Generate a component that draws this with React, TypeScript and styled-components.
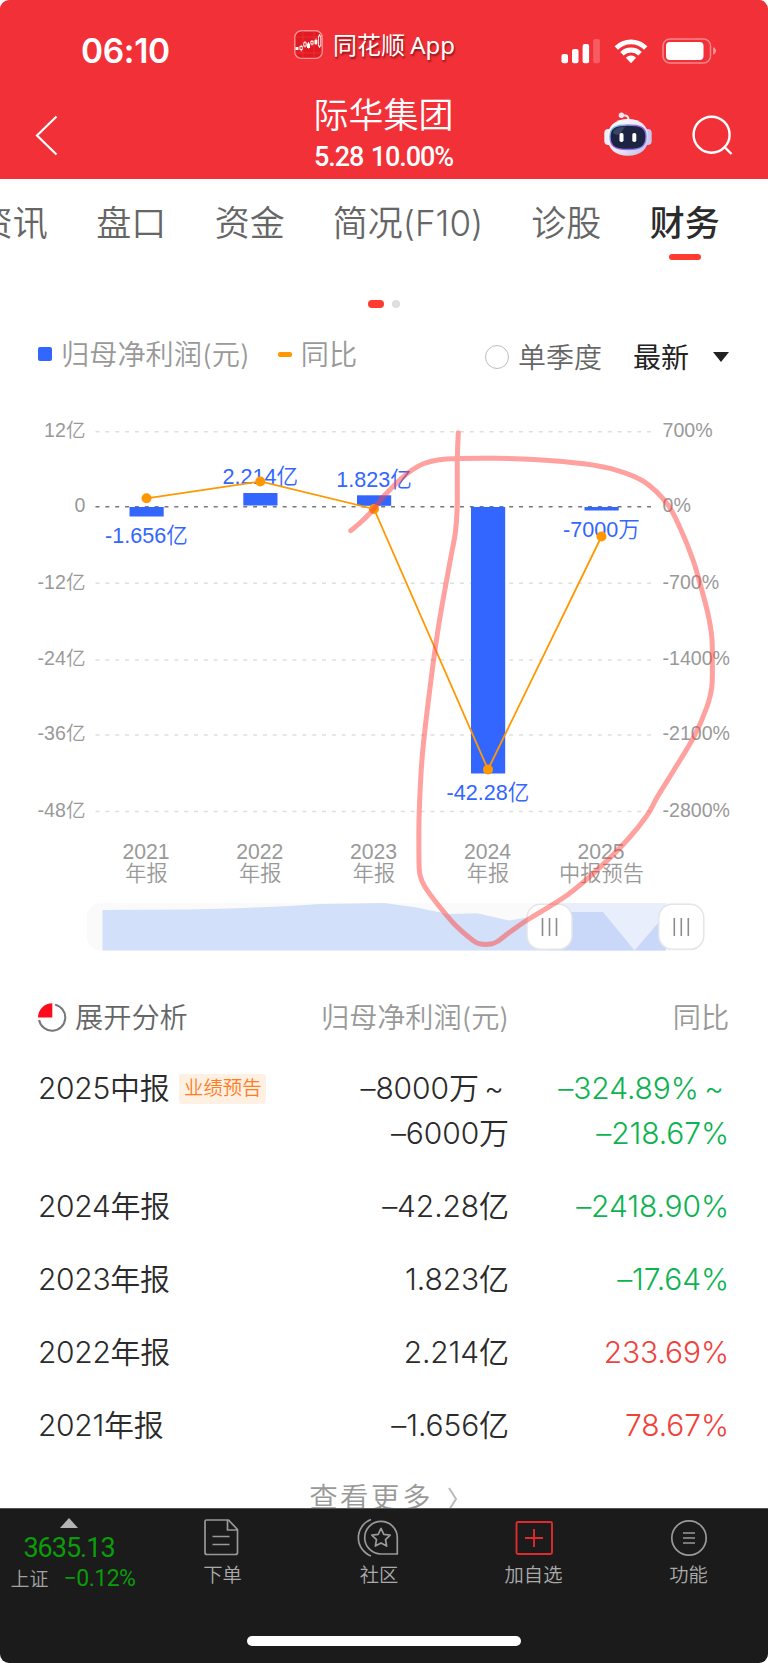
import React from "react";
import styled, { createGlobalStyle } from "styled-components";

const GlobalStyle = createGlobalStyle`
  * { box-sizing: border-box; }
  html, body { margin: 0; padding: 0; background: #fff; }
  body { font-family: Inter, "Noto Sans CJK SC", sans-serif; }
  svg { display: block; }
`;

const Screen = styled.div`
  width: 768px;
  height: 1663px;
  display: flex;
  flex-direction: column;
  overflow: hidden;
  border-radius: 9px;
  background: #fff;
`;

const Header = styled.header`
  height: 179px;
  flex: none;
  background: #f23038;
  color: #fff;
  display: flex;
  flex-direction: column;
`;

const StatusBar = styled.div`
  height: 90px;
  display: grid;
  grid-template-columns: 213px 1fr 154px;
  padding: 0 54px 0 81px;
`;

const Clock = styled.div`
  padding-top: 31px;
  font-size: 33.5px;
  font-weight: 600;
  line-height: 40px;
  letter-spacing: -0.35px;
`;

const AppBadge = styled.div`
  display: flex;
  gap: 10px;
  padding-top: 30px;
  height: 60px;
`;

const AppName = styled.span`
  font-family: "Noto Sans", "Noto Sans CJK SC", sans-serif;
  font-size: 24px;
  line-height: 30px;
  white-space: pre;
  word-spacing: -1px;
  text-shadow: 1px 2px 2px rgba(70, 0, 0, 0.6);
`;

const StatusIcons = styled.div`
  padding-top: 36px;
`;

const NavBar = styled.div`
  height: 89px;
  display: grid;
  grid-template-columns: 230px 1fr 230px;
`;

const BackButton = styled.div`
  padding: 25px 0 0 34px;
`;

const TitleBlock = styled.div`
  display: flex;
  flex-direction: column;
  align-items: center;
  padding: 1px 1px 0 0;
`;

const StockName = styled.div`
  font-size: 35px;
  font-weight: 350;
  line-height: 48px;
`;

const StockQuote = styled.div`
  font-family: Roboto, sans-serif;
  font-size: 27px;
  font-weight: 500;
  line-height: 36px;
  letter-spacing: -1.1px;
  word-spacing: 2px;
  white-space: nowrap;
`;

const NavActions = styled.div`
  display: flex;
  gap: 37px;
  padding: 21px 0 0 65px;
`;

const Tabs = styled.nav`
  height: 100px;
  flex: none;
  display: flex;
  justify-content: flex-end;
  gap: 48px;
  padding: 17px 48px 0 0;
  overflow: hidden;
`;

const Tab = styled.div<{ $active?: boolean; $width?: number }>`
  flex: none;
  display: flex;
  flex-direction: column;
  align-items: center;
  width: ${(p) => p.$width ?? 70.5}px;
  font-size: 35px;
  line-height: 54px;
  font-weight: ${(p) => (p.$active ? 500 : 350)};
  color: ${(p) => (p.$active ? "#2b2b2b" : "#666")};
  white-space: nowrap;
  &::after {
    content: "";
    display: ${(p) => (p.$active ? "block" : "none")};
    width: 32px;
    height: 6px;
    margin-top: 4px;
    border-radius: 3px;
    background: #ff3b30;
  }
`;

const Pager = styled.div`
  height: 50px;
  flex: none;
  display: flex;
  justify-content: center;
  gap: 8px;
  padding-top: 21px;
`;

const PagerDot = styled.i<{ $active?: boolean }>`
  width: ${(p) => (p.$active ? 16 : 8)}px;
  height: 8px;
  border-radius: 4px;
  background: ${(p) => (p.$active ? "#ff3b30" : "#dedede")};
`;

const Toolbar = styled.div`
  height: 81px;
  flex: none;
  display: flex;
  padding: 0 39px 0 38px;
  font-size: 28px;
  font-weight: 350;
  line-height: 40px;
`;

const Legend = styled.div<{ $gap: number; $ml?: number }>`
  display: flex;
  align-items: center;
  height: 40px;
  margin: 5px 0 0 ${(p) => p.$ml ?? 0}px;
  gap: ${(p) => p.$gap}px;
  color: #999;
  white-space: nowrap;
`;

const LegendText = styled.span`
  padding-top: 2px;
  font-size: 28.2px;
`;

const Swatch = styled.i<{ $color: string; $height: number }>`
  width: 14px;
  height: ${(p) => p.$height}px;
  border-radius: 2px;
  background: ${(p) => p.$color};
`;

const Filters = styled.div`
  display: flex;
  align-items: center;
  height: 40px;
  margin: 8px 0 0 auto;
`;

const Radio = styled.i`
  width: 24px;
  height: 24px;
  margin-right: 9px;
  border: 1.3px solid #bdbdbd;
  border-radius: 50%;
`;

const QuarterLabel = styled.span`
  color: #666;
  margin-right: 31px;
  padding-top: 2px;
`;

const LatestLabel = styled.span`
  color: #222;
  font-weight: 400;
  margin-right: 24px;
  padding-top: 1px;
`;

const Caret = styled.i`
  border: 8.5px solid transparent;
  border-top: 10px solid #222;
  border-bottom: 0;
`;

const Chart = styled.svg`
  flex: none;
  font-family: "Liberation Sans", "Noto Sans CJK SC", sans-serif;
  font-weight: 350;
`;

const Table = styled.section`
  flex: none;
  height: 543px;
  overflow: hidden;
  padding: 33px 39px 0 38px;
`;

const Row = styled.div<{ $lines?: number }>`
  display: grid;
  grid-template-columns: 240px 231px 1fr;
  height: ${(p) => (p.$lines === 2 ? 118 : 73)}px;
  font-size: 30px;
  font-weight: 350;
  line-height: 45px;
  color: #2b2b2b;
`;

const HeadRow = styled(Row)`
  height: 68px;
  font-size: 28.2px;
  color: #999;
  line-height: 40px;
  white-space: nowrap;
`;

const Expand = styled.div`
  display: flex;
  gap: 8px;
  color: #666;
  svg { margin-top: 5px; }
`;

const Period = styled.div`
  display: flex;
  gap: 10px;
  white-space: nowrap;
  letter-spacing: -0.3px;
`;

const Tag = styled.span`
  width: 87px;
  height: 30px;
  margin-top: 8px;
  border-radius: 2px;
  background: #fff0e4;
  color: #ff7d1e;
  font-size: 19.4px;
  line-height: 29px;
  text-align: center;
  letter-spacing: 0;
`;

const Amount = styled.div`
  text-align: right;
  white-space: pre;
  word-spacing: -3px;
  letter-spacing: -0.1px;
`;

const Ratio = styled(Amount)<{ $trend?: "up" | "down" }>`
  color: ${(p) => (p.$trend === "up" ? "#f0423c" : p.$trend === "down" ? "#0cb350" : "inherit")};
`;

const More = styled.div`
  display: flex;
  justify-content: center;
  gap: 15px;
  margin-top: -1px;
  color: #999;
  font-size: 28.5px;
  font-weight: 350;
  letter-spacing: 2.4px;
  line-height: 45px;
  svg { margin-top: 12px; }
`;

const Footer = styled.footer`
  flex: 1;
  display: flex;
  flex-direction: column;
  background: #1b1b1b;
  border-top: 1px solid #555;
`;

const NavItems = styled.div`
  height: 127px;
  display: grid;
  grid-template-columns: 145px 155px 158px 151px 159px;
`;

const IndexPanel = styled.div`
  display: flex;
  flex-direction: column;
  align-items: center;
  padding: 9px 7px 0 0;
  color: #0a9c0a;
  font-family: Roboto, "Noto Sans CJK SC", sans-serif;
  font-weight: 450;
`;

const IndexArrow = styled.i`
  border: 9px solid transparent;
  border-bottom: 10px solid #b3b3b3;
  border-top: 0;
`;

const IndexValue = styled.div`
  margin-top: 5px;
  font-size: 27px;
  line-height: 30px;
  letter-spacing: -1px;
`;

const IndexChange = styled.div`
  display: flex;
  gap: 15px;
  margin-left: 8px;
  font-size: 23px;
  line-height: 31px;
  letter-spacing: -0.5px;
  white-space: nowrap;
`;

const IndexName = styled.span`
  padding-top: 1px;
  color: #a3a3a3;
  font-size: 19px;
  font-weight: 350;
  letter-spacing: 0;
`;

const NavItem = styled.div`
  display: flex;
  flex-direction: column;
  align-items: center;
  gap: 3px;
  padding-top: 9px;
  color: #aaa;
  font-size: 19.3px;
  font-weight: 350;
  line-height: 28px;
`;

const HomeIndicator = styled.i`
  width: 274px;
  height: 10px;
  border-radius: 5px;
  background: #fff;
  align-self: center;
`;

const GRID = [
  { y: 431.7, left: "12亿", right: "700%" },
  { y: 506.7, left: "0", right: "0%" },
  { y: 583.3, left: "-12亿", right: "-700%" },
  { y: 660, left: "-24亿", right: "-1400%" },
  { y: 735, left: "-36亿", right: "-2100%" },
  { y: 811.5, left: "-48亿", right: "-2800%" },
];

const SERIES = [
  { x: 146.5, top: 507, h: 9.5, label: "-1.656亿", ly: 542.6, py: 498.3, year: "2021", kind: "年报" },
  { x: 260.3, top: 493, h: 12.5, label: "2.214亿", ly: 484, py: 481.5, year: "2022", kind: "年报" },
  { x: 374, top: 495.3, h: 10.5, label: "1.823亿", ly: 486.7, py: 509, year: "2023", kind: "年报" },
  { x: 488, top: 507, h: 266.5, label: "-42.28亿", ly: 799.5, py: 769.5, year: "2024", kind: "年报" },
  { x: 601.5, top: 507, h: 3.5, label: "-7000万", ly: 537, py: 536.5, year: "2025", kind: "中报预告" },
];

const MARKER: [number, number][] = [
  [350.7, 530.7], [361, 522], [372, 511], [384, 496], [400.7, 479], [412, 470], [424, 463.5], [438, 460], [457.3, 458.6],
  [494, 458.3], [534, 459.5], [584, 463.8], [617, 470.3], [644, 481.7], [667.3, 504], [681, 530], [693, 560],
  [701, 587], [708, 614], [711.8, 637], [712.3, 660], [711.8, 687], [706.5, 708], [694, 736.7], [674, 770], [657.3, 797],
  [647.3, 815], [627.3, 840], [600.7, 866.7], [567.3, 895], [527.3, 920], [510.7, 931.5], [497.3, 941.5], [491, 944],
  [480.7, 944], [473, 940.5], [455.7, 925.5], [439, 906], [425, 887], [420, 875], [419, 860], [419.2, 813.3], [422.5, 753.3],
  [431, 680], [439, 623.3], [450.5, 559], [455.3, 533], [457.2, 507], [457.3, 460], [458.3, 432.7],
];

// Catmull-Rom interpolation through the points of a freehand stroke.
function smooth(pts: [number, number][]) {
  let d = `M${pts[0][0]} ${pts[0][1]}`;
  for (let i = 0; i < pts.length - 1; i++) {
    const a = pts[Math.max(i - 1, 0)];
    const b = pts[i];
    const c = pts[i + 1];
    const e = pts[Math.min(i + 2, pts.length - 1)];
    d += `C${b[0] + (c[0] - a[0]) / 6} ${b[1] + (c[1] - a[1]) / 6} ${c[0] - (e[0] - b[0]) / 6} ${c[1] - (e[1] - b[1]) / 6} ${c[0]} ${c[1]}`;
  }
  return d;
}

const ROWS: { period: string; tag?: string; amount: string[]; ratio: string[]; trend: "up" | "down" }[] = [
  { period: "2025中报", tag: "业绩预告", amount: ["–8000万 ~ ", "–6000万"], ratio: ["–324.89% ~ ", "–218.67%"], trend: "down" },
  { period: "2024年报", amount: ["–42.28亿"], ratio: ["–2418.90%"], trend: "down" },
  { period: "2023年报", amount: ["1.823亿"], ratio: ["–17.64%"], trend: "down" },
  { period: "2022年报", amount: ["2.214亿"], ratio: ["233.69%"], trend: "up" },
  { period: "2021年报", amount: ["–1.656亿"], ratio: ["78.67%"], trend: "up" },
];

const AppLogo = () => (
  <svg width="29" height="30" viewBox="0 0 29 30">
    <rect x="0.8" y="0.8" width="27.4" height="27.6" rx="6.5" fill="#e01a22" stroke="#ff8f90" strokeWidth="1.4" />
    <path d="M1 7h27M1 23h27M20 1v27M9 1v27" stroke="#ee3a40" strokeWidth="0.6" />
    <g fill="#fff">
      <rect x="1.5" y="17" width="3" height="3" />
      <rect x="13" y="13.5" width="3" height="4.5" />
      <rect x="20.5" y="10" width="2.8" height="4" />
    </g>
    <g fill="none" stroke="#fff" strokeWidth="0.9">
      <path d="M7.2 15v1.5M7.2 19.5v2M11 11v2M11 16v1.5M18 10v1.5M18 14v1.5M25.6 4v2M25.6 16v2M22 8.5v6.5M14.5 12v6.5" />
      <rect x="6" y="16.5" width="2.2" height="3" />
      <rect x="9.8" y="12.8" width="2.4" height="3.2" />
      <rect x="16.9" y="11.3" width="2.2" height="2.7" />
      <rect x="24.4" y="6" width="2.4" height="10" />
    </g>
  </svg>
);

const DeviceStatus = () => (
  <svg width="156" height="30" viewBox="560 36 156 30" fill="#fff">
    <rect x="561.5" y="54" width="6.5" height="9.2" rx="2" />
    <rect x="572" y="49" width="6.5" height="14.2" rx="2" />
    <rect x="582.6" y="44" width="6.5" height="19.2" rx="2" />
    <rect x="593.2" y="39" width="6.7" height="24.2" rx="2" opacity="0.22" />
    <path d="M614.6 46.3a23.2 23.2 0 0 1 32.8 0l-3.3 3.5a18.4 18.4 0 0 0-26.2 0Z" strokeLinejoin="round" />
    <path d="M620.2 52a15.3 15.3 0 0 1 21.6 0l-3.4 3.5a10.5 10.5 0 0 0-14.8 0Z" />
    <path d="M625.9 57.7a7.3 7.3 0 0 1 10.2 0l-5.1 5.5Z" />
    <rect x="663" y="39" width="47.5" height="24" rx="7" fill="none" stroke="#fff" strokeOpacity="0.42" strokeWidth="1.5" />
    <rect x="666" y="42" width="37.5" height="18" rx="4" />
    <path d="M713.2 47.3a4 4 0 0 1 0 7.6Z" opacity="0.5" />
  </svg>
);

const Robot = () => (
  <svg width="50" height="46" viewBox="603 111 50 46">
    <defs>
      <linearGradient id="head" x1="0" y1="0" x2="1" y2="1">
        <stop offset="0" stopColor="#ffffff" />
        <stop offset="0.6" stopColor="#e6e4f4" />
        <stop offset="1" stopColor="#b9b6e4" />
      </linearGradient>
      <linearGradient id="rim" x1="0" y1="0" x2="1" y2="1">
        <stop offset="0" stopColor="#6bd8ee" />
        <stop offset="0.45" stopColor="#a45be0" />
        <stop offset="1" stopColor="#7484f4" />
      </linearGradient>
    </defs>
    <path d="M622 115.500h3.500q3 0.500 3.200 5" fill="none" stroke="#f4e9f2" strokeWidth="2" />
    <circle cx="621.4" cy="115.3" r="2.7" fill="#f1e4ee" />
    <rect x="604.3" y="129" width="8" height="16" rx="4" fill="#eeeef8" />
    <rect x="643.7" y="129" width="8" height="16" rx="4" fill="#c9c7ec" />
    <path d="M628 119c13 0 20.500 7.500 20.500 18 0 12-8 18.800-20.500 18.800S607.500 149 607.500 137c0-10.500 7.500-18 20.500-18Z" fill="url(#head)" />
    <path d="M628 125c13 0 18 2.500 18 11.500 0 10-5 13-18 13s-18-3-18-13c0-9 5-11.500 18-11.500Z" fill="#1c2441" stroke="url(#rim)" strokeWidth="1.3" />
    <path d="M613 133c1-5 5-6 12-6l-5 7q-4 2-7-1Z" fill="#3a4565" />
    <rect x="619.5" y="133" width="4" height="9" rx="1.8" fill="#fff" />
    <rect x="632.3" y="133" width="4" height="9" rx="1.8" fill="#fff" />
  </svg>
);

const ProfitChart = () => (
  <Chart width="768" height="555" viewBox="0 410 768 555">
    {GRID.map((g, i) => (
      <g key={g.left} fill="#999" fontSize="19.6">
        <line x1="95.5" x2="651" y1={g.y} y2={g.y} stroke={i === 1 ? "#777" : "#dfdfdf"} strokeWidth="1.4" strokeDasharray="4 5.85" />
        <text x="85.5" y={g.y + 5.2} textAnchor="end">{g.left}</text>
        <text x="662.5" y={g.y + 5.2}>{g.right}</text>
      </g>
    ))}
    {SERIES.map((s) => (
      <g key={s.year} textAnchor="middle">
        <rect x={s.x - 17} y={s.top} width="34.2" height={s.h} fill="#3366ff" />
        <text x={s.x} y={s.ly} fontSize="21.6" fill="#3366ff">{s.label}</text>
        <text x={s.x - 0.5} y="859.3" fontSize="21.2" fill="#999">{s.year}</text>
        <text x={s.x} y="881.3" fontSize="21.2" fill="#999">{s.kind}</text>
      </g>
    ))}
    <polyline points={SERIES.map((s) => `${s.x},${s.py}`).join(" ")} fill="none" stroke="#ff9800" strokeWidth="1.8" />
    {SERIES.map((s) => (
      <circle key={s.year} cx={s.x} cy={s.py} r="5" fill="#ff9800" />
    ))}

    <rect x="87" y="903" width="616" height="47.5" rx="14" fill="#fafafa" />
    <path d="M102.500 950.500V910L190 909.500 230 908.500 290 906 320 904 384 903 415 907.300 448 914 477 913.300 509 920.500 530 917 549 915V950.500Z" fill="#d3e0f9" />
    <rect x="549" y="903" width="117" height="47.5" fill="#e8eefb" />
    <path d="M549 950.500V912H603L634.500 950.500 659 922 666 917V950.500Z" fill="#c9d8f9" />
    {[549.5, 681.3].map((x) => (
      <g key={x}>
        <rect x={x - 22.5} y="904.3" width="45" height="45" rx="13.5" fill="#fff" stroke="#e3e5e8" strokeWidth="1.5" />
        <path d={`M${x - 7} 918v18M${x} 918v18M${x + 7} 918v18`} stroke="#8c8c8c" strokeWidth="1.6" />
      </g>
    ))}
    <path d={smooth(MARKER)} fill="none" stroke="#ff443f" strokeOpacity="0.5" strokeWidth="5" strokeLinecap="round" strokeLinejoin="round" />
  </Chart>
);

export default function App() {
  return (
    <Screen>
      <GlobalStyle />
      <Header>
        <StatusBar>
          <Clock>06:10</Clock>
          <AppBadge>
            <AppLogo />
            <AppName>同花顺 App</AppName>
          </AppBadge>
          <StatusIcons>
            <DeviceStatus />
          </StatusIcons>
        </StatusBar>
        <NavBar>
          <BackButton>
            <svg width="26" height="42" viewBox="34 115 26 42" fill="none" stroke="#fff" strokeWidth="2.2">
              <path d="M56.500 116.500 37 135.500 56.500 154.500" />
            </svg>
          </BackButton>
          <TitleBlock>
            <StockName>际华集团</StockName>
            <StockQuote>5.28 10.00%</StockQuote>
          </TitleBlock>
          <NavActions>
            <Robot />
            <svg width="44" height="46" viewBox="690 111 44 46" fill="none" stroke="#fff" strokeWidth="2.4">
              <circle cx="711.6" cy="134.7" r="18" />
              <path d="m724 146.500 7.500 7.500" />
            </svg>
          </NavActions>
        </NavBar>
      </Header>

      <Tabs>
        <Tab>资讯</Tab>
        <Tab>盘口</Tab>
        <Tab>资金</Tab>
        <Tab $width={150}>简况(F10)</Tab>
        <Tab>诊股</Tab>
        <Tab $active>财务</Tab>
      </Tabs>

      <Pager>
        <PagerDot $active />
        <PagerDot />
      </Pager>

      <Toolbar>
        <Legend $gap={9}>
          <Swatch $color="#3366ff" $height={14} />
          <LegendText>归母净利润(元)</LegendText>
        </Legend>
        <Legend $gap={9} $ml={28}>
          <Swatch $color="#ff9800" $height={5} />
          <LegendText>同比</LegendText>
        </Legend>
        <Filters>
          <Radio />
          <QuarterLabel>单季度</QuarterLabel>
          <LatestLabel>最新</LatestLabel>
          <Caret />
        </Filters>
      </Toolbar>

      <ProfitChart />

      <Table>
        <HeadRow>
          <Expand>
            <svg width="29" height="29" viewBox="38 1003 29 29">
              <path d="M52.300 1003.200V1017.500H38A14.300 14.300 0 0 1 52.300 1003.200Z" fill="#fc0d1b" />
              <path d="M55 1004.600a13.200 13.200 0 1 1-15.900 15.400" fill="none" stroke="#777" strokeWidth="2" />
            </svg>
            展开分析
          </Expand>
          <Amount>归母净利润(元)</Amount>
          <Ratio>同比</Ratio>
        </HeadRow>
        {ROWS.map((r) => (
          <Row key={r.period} $lines={r.amount.length}>
            <Period>
              {r.period}
              {r.tag && <Tag>{r.tag}</Tag>}
            </Period>
            <Amount>{r.amount.join("\n")}</Amount>
            <Ratio $trend={r.trend}>{r.ratio.join("\n")}</Ratio>
          </Row>
        ))}
        <More>
          查看更多
          <svg width="10" height="26" viewBox="0 0 10 26" fill="none" stroke="#bbb" strokeWidth="2">
            <path d="m1 1 7 11-7 11" />
          </svg>
        </More>
      </Table>

      <Footer>
        <NavItems>
          <IndexPanel>
            <IndexArrow />
            <IndexValue>3635.13</IndexValue>
            <IndexChange>
              <IndexName>上证</IndexName>−0.12%
            </IndexChange>
          </IndexPanel>
          <NavItem>
            <svg width="38" height="40" viewBox="203.500 1518 38 40" fill="none" stroke="#999" strokeWidth="1.7">
              <path d="M206 1520h22l9 9.500V1552.500q0 2-2 2H206.500q-2 0-2-2V1521.500q0-1.500 1.500-1.500ZM227 1520v10h10M212 1536.500h17M212 1544.500h17" />
            </svg>
            下单
          </NavItem>
          <NavItem>
            <svg width="44" height="40" viewBox="357 1518 44 40" fill="none" stroke="#999" strokeWidth="1.7" strokeLinejoin="round">
              <path d="M371 1519.500a19.500 19.500 0 0 0 0 36.500M397.300 1554H381a16.300 16.300 0 1 1 16.300-16.300ZM381 1528.300l2.800 6 6.400.8-4.700 4.500 1.200 6.500-5.700-3.200-5.700 3.200 1.200-6.500-4.700-4.500 6.400-.8Z" />
            </svg>
            社区
          </NavItem>
          <NavItem>
            <svg width="40" height="40" viewBox="515.500 1518 40 40" fill="none" stroke="#df2a2f" strokeWidth="1.9">
              <rect x="518" y="1522" width="35.5" height="32" rx="1.5" />
              <path d="M526.500 1538h18M535.500 1529v18" />
            </svg>
            加自选
          </NavItem>
          <NavItem>
            <svg width="40" height="40" viewBox="669 1518 40 40" fill="none" stroke="#999" strokeWidth="1.7">
              <circle cx="689" cy="1538" r="17.2" />
              <path d="M683 1533h12M683 1538h12M683 1543h12" />
            </svg>
            功能
          </NavItem>
        </NavItems>
        <HomeIndicator />
      </Footer>
    </Screen>
  );
}
